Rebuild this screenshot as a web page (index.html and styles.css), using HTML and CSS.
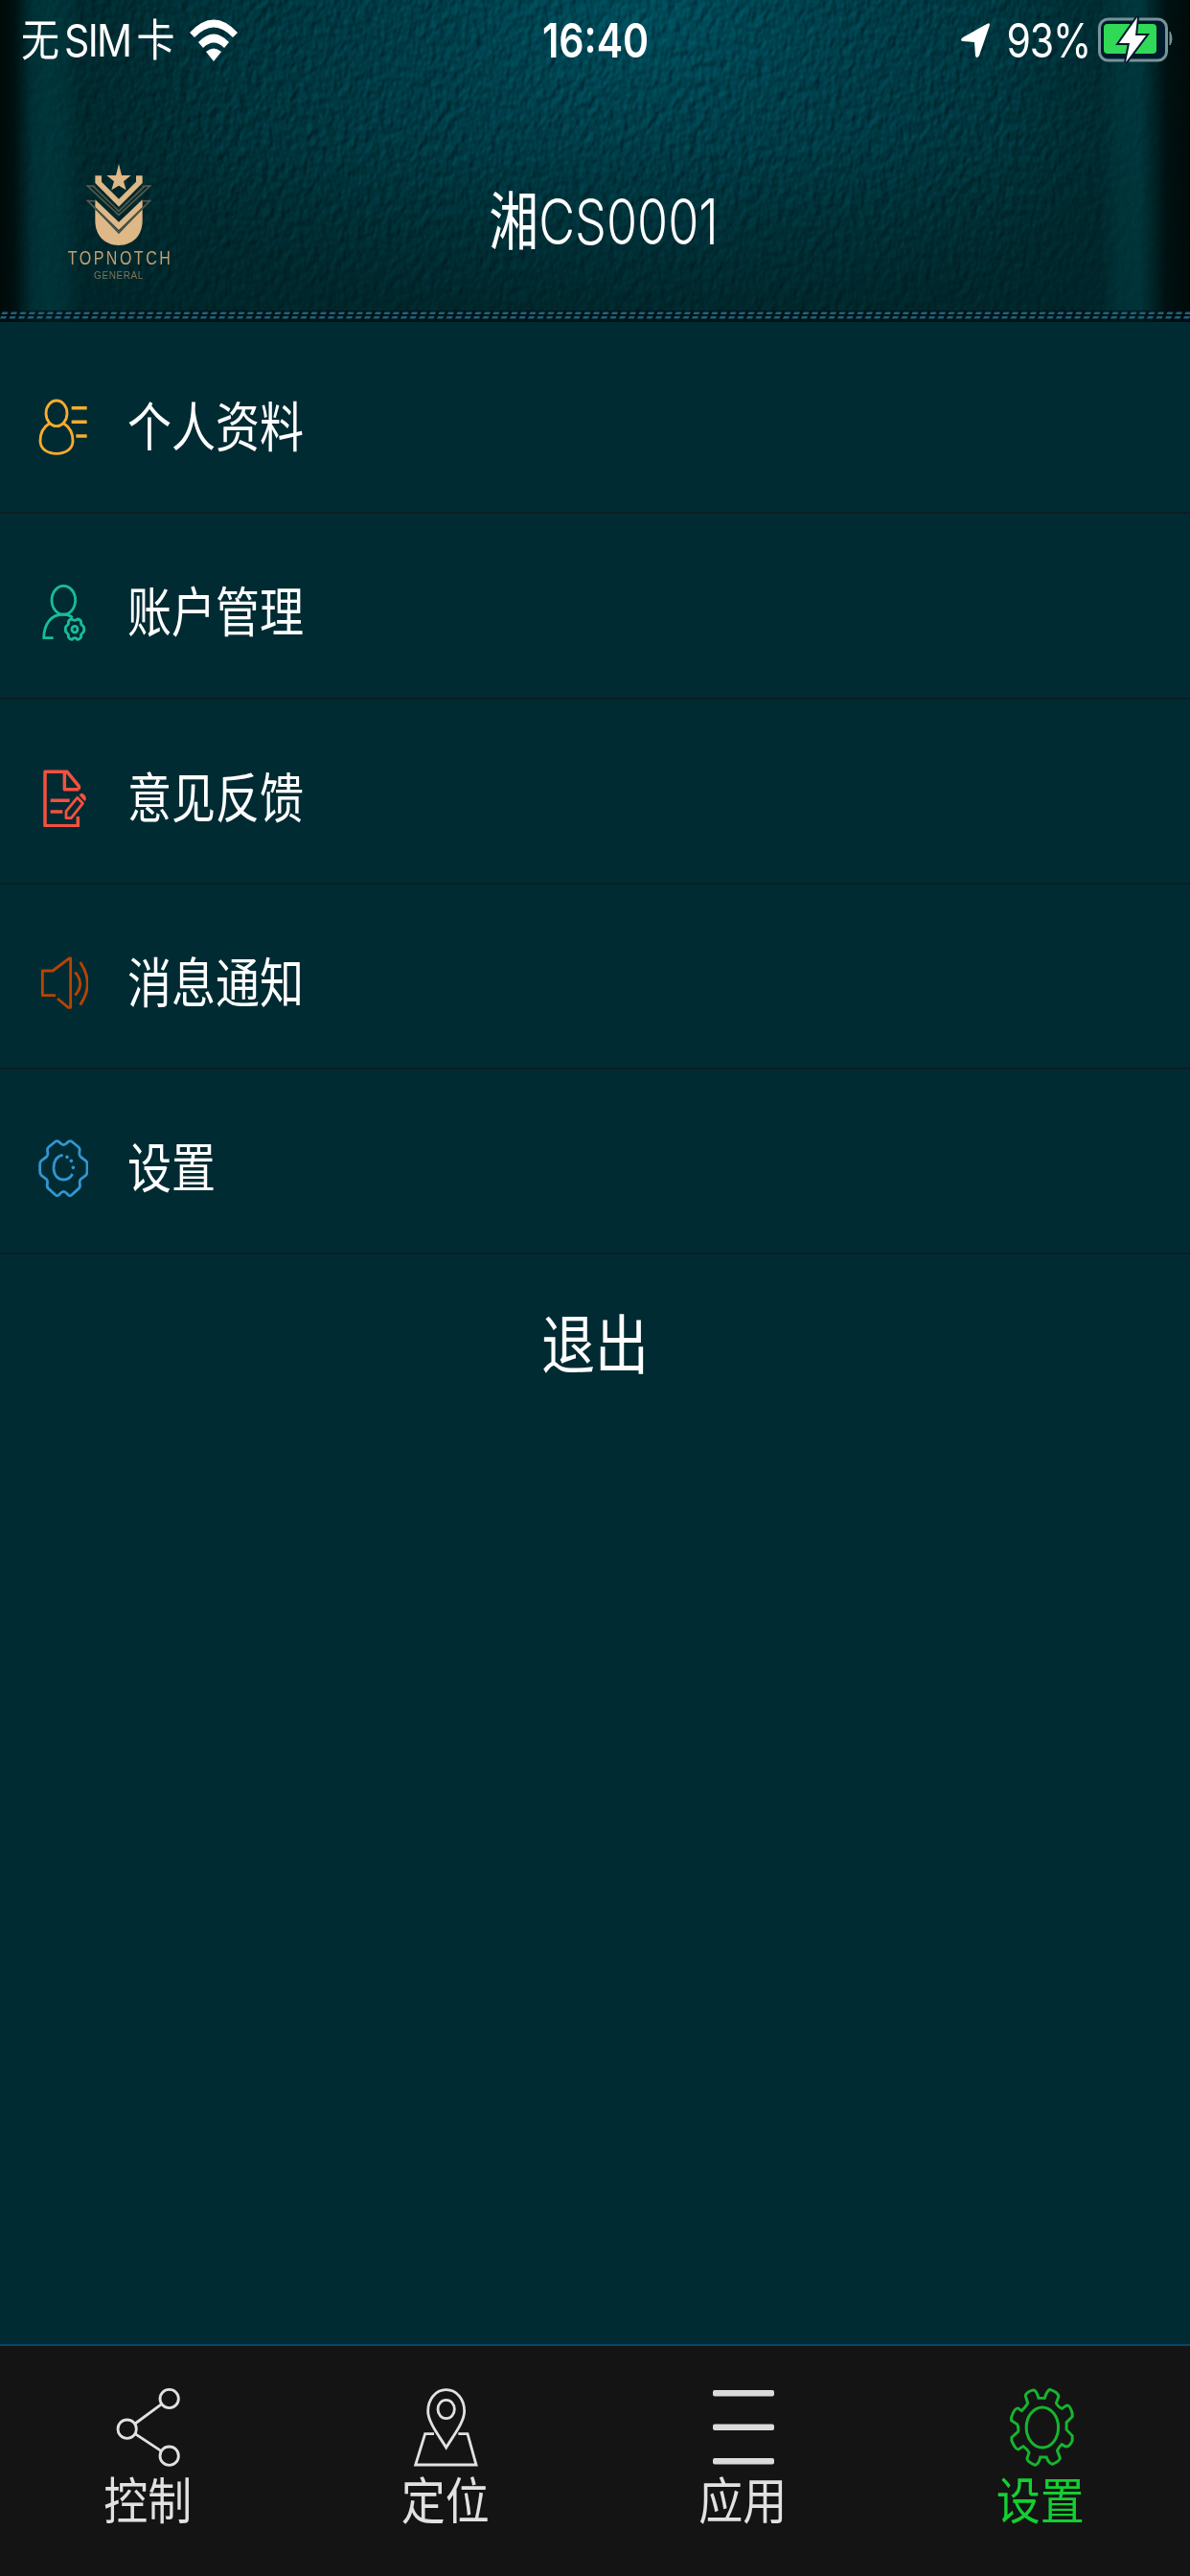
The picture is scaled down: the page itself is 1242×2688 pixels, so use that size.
FILE: index.html
```html
<!DOCTYPE html>
<html lang="zh-CN">
<head>
    <meta charset="UTF-8">
    <meta name="viewport" content="width=device-width, initial-scale=1.0">
    <title>设置</title>
    <link rel="stylesheet" href="styles.css">
</head>
<body>
    <div class="app">
        <header class="header">
            <svg class="leather" width="1242" height="336">
                <filter id="leather" x="0" y="0" width="100%" height="100%" color-interpolation-filters="sRGB">
                    <feTurbulence type="fractalNoise" baseFrequency="0.13 0.09" numOctaves="2" seed="8" result="noise"/>
                    <feDiffuseLighting in="noise" surfaceScale="1.9" diffuseConstant="0.64" lighting-color="#ffffff">
                        <feDistantLight azimuth="225" elevation="45"/>
                    </feDiffuseLighting>
                </filter>
                <rect width="1242" height="336" filter="url(#leather)"/>
            </svg>
            <div class="edges"></div>

            <!-- Status bar -->
            <div class="status-bar">
                <div class="status-left">
                    <span class="carrier">无<span class="sim">SIM</span>卡</span>
                    <svg class="wifi" width="50" height="45" viewBox="0 0 50 45">
                        <path d="M0 14Q25-13 50 14L45 19Q25-2 5 19Z"/>
                        <path d="M9 24Q25 7 41 24L36 30Q25 19 14 30Z"/>
                        <path d="M17 34Q25 27 33 34L25 44Z"/>
                    </svg>
                </div>
                <div class="clock">16:40</div>
                <div class="status-right">
                    <svg class="location" width="30" height="37" viewBox="0 0 30 37">
                        <path d="M30 2Q30-1 27 1L2 15Q-2 18 2 19L14 20L15 34Q16 38 19 34Z"/>
                    </svg>
                    <span class="percent">93%</span>
                    <svg class="battery" width="80" height="50" viewBox="0 0 80 50">
                        <rect x="1.5" y="3" width="70" height="43" rx="9" fill="#001b2c" stroke="#779499" stroke-width="3"/>
                        <rect x="6" y="8" width="55" height="31" rx="4" fill="#30d956"/>
                        <path d="M75 16Q79 24 75 30Z" fill="#779499" stroke="#779499"/>
                        <path d="M41 1L22 28H33L29 48L50 20H39Z" fill="#fff" stroke="#001b2c" stroke-width="4" paint-order="stroke"/>
                    </svg>
                </div>
            </div>

            <div class="title-bar">
                <div class="logo">
                    <svg width="68" height="86" viewBox="0 0 204 258">
                        <path d="M102 0L111 36H140L117 55L125 82L102 68L79 82L87 55L64 36H93Z"/>
                        <path d="M28 37H48V56L102 110L156 56V37H176V60L102 134L28 60Z"/>
                        <path d="M28 112L102 182L176 112V135L102 207L28 135Z"/>
                        <path d="M28 142L102 219L176 142V178C176 225 145 255 102 255S28 225 28 178Z"/>
                        <path class="logo-line" d="M28 70L4 69L102 160L200 69L176 70M28 117L4 115L102 213L200 115L176 117"/>
                        <path class="logo-line" d="M22 70L102 148L182 70"/>
                    </svg>
                    <div class="brand">TOPNOTCH</div>
                    <div class="brand-sub">GENERAL</div>
                </div>
                <h1 class="title">湘<span class="plate">CS0001</span></h1>
            </div>

            <svg class="stitch" width="1242" height="12">
                <defs>
                    <pattern id="stitch" width="9.5" height="12" patternUnits="userSpaceOnUse">
                        <path d="M1.5 4L2.5 1.5H8.5L7.5 4ZM0 8.5L1 6H7L6 8.5Z" fill="#22627a"/>
                    </pattern>
                </defs>
                <rect width="1242" height="12" fill="url(#stitch)"/>
            </svg>
        </header>

        <main class="content">
            <ul class="menu">
                <li class="menu-item">
                    <svg class="menu-icon orange" viewBox="0 0 156 180">
                        <ellipse cx="57" cy="46" rx="33" ry="40"/>
                        <path d="M35 77C17 88 6 109 6 132C6 158 29 172 57 172S108 158 108 132C108 109 97 88 79 77"/>
                        <path class="bold" d="M104 29H152M104 73H152M118 117H152"/>
                    </svg>
                    <span class="menu-text">个人资料</span>
                </li>
                <li class="menu-item">
                    <svg class="menu-icon green" viewBox="0 0 156 180">
                        <ellipse cx="79" cy="52" rx="37" ry="45"/>
                        <path d="M47 170H17C18 126 40 96 79 96Q94 96 107 106"/>
                        <path d="M114 115Q119 115 122 111Q130 111 134 119Q132 128 138 131Q144 135 143 143Q144 151 138 155Q132 158 134 167Q130 175 122 175Q119 170 114 170Q109 170 106 175Q98 175 94 167Q96 158 90 155Q84 151 85 143Q84 135 90 131Q96 128 94 119Q98 111 106 111Q109 115 114 115Z"/>
                        <ellipse cx="114" cy="143" rx="9" ry="10"/>
                    </svg>
                    <span class="menu-text">账户管理</span>
                </li>
                <li class="menu-item">
                    <svg class="menu-icon red" viewBox="0 0 156 180">
                        <path class="bold" d="M127 62H82V7M127 62V52L90 7H21V176H124V147M38 97H98M38 132H76"/>
                        <path d="M87 152L87 131L122 88L139 106L103 152Z"/>
                        <path class="fill" d="M129 79Q134 70 142 77Q151 84 149 95L145 99L129 81Z"/>
                    </svg>
                    <span class="menu-text">意见反馈</span>
                </li>
                <li class="menu-item">
                    <svg class="menu-icon rust" viewBox="0 0 156 180">
                        <path d="M54 128H13V51H45L97 12H101V166H94L60 138"/>
                        <path d="M115 55Q147 91 115 128M131 24Q177 91 131 158"/>
                    </svg>
                    <span class="menu-text">消息通知</span>
                </li>
                <li class="menu-item">
                    <svg class="menu-icon blue" viewBox="0 0 156 180">
                        <path d="M79 17Q84 17 94 7Q99 3 104 6L126 24Q131 28 129 37Q127 51 132 54L149 67Q153 70 153 78V98Q153 108 149 112L133 124Q128 128 130 140Q132 149 126 154L104 174Q99 178 94 174Q84 163 79 163Q74 163 64 174Q59 178 54 174L32 154Q26 149 28 140Q30 128 25 124L9 112Q5 108 5 98V78Q5 70 9 67L26 54Q31 51 29 37Q27 28 32 24L54 6Q59 3 64 7Q74 17 79 17Z"/>
                        <path d="M77 49C58 51 48 68 48 88C48 112 61 126 79 126Q97 126 107 108"/>
                        <path class="dots" d="M90 55H90.1M103 67H103.1M109 88H109.1"/>
                    </svg>
                    <span class="menu-text">设置</span>
                </li>
            </ul>
            <div class="logout"><span class="logout-text">退出</span></div>
        </main>

        <nav class="tabs">
            <div class="tab">
                <svg width="72" height="85" viewBox="0 0 216 255">
                    <circle cx="173" cy="39" r="29"/>
                    <circle cx="41" cy="134" r="29"/>
                    <circle cx="173" cy="218" r="29"/>
                    <path d="M149 56L66 117M66 149L148 203"/>
                </svg>
                <span class="tab-text">控制</span>
            </div>
            <div class="tab">
                <svg width="73" height="85" viewBox="0 0 219 255">
                    <path d="M110 11C76 11 53 42 53 78C53 111 85 151 110 192C135 151 167 111 167 78C167 42 144 11 110 11Z"/>
                    <ellipse cx="110" cy="72" rx="26" ry="29"/>
                    <path d="M72 149H44L14 246H204L177 149H148"/>
                </svg>
                <span class="tab-text">定位</span>
            </div>
            <div class="tab">
                <svg width="64" height="85" viewBox="0 0 64 85">
                    <g fill="#dcdada" stroke="none">
                        <rect y="4" width="64" height="6.5" rx="2"/>
                        <rect y="39.5" width="64" height="6.5" rx="2"/>
                        <rect y="75" width="64" height="6.5" rx="2"/>
                    </g>
                </svg>
                <span class="tab-text">应用</span>
            </div>
            <div class="tab active">
                <svg width="70" height="85" viewBox="0 0 197 255" preserveAspectRatio="none">
                    <path d="M90 37Q83 12 75 12L65 15Q50 23 52 32L58 52Q56 60 40 77L30 69Q20 67 10 97V107L27 119Q32 128 30 142L11 160V170Q20 195 30 198L45 188Q57 197 62 208L56 226Q57 237 80 247Q90 244 95 222H113Q119 240 130 244Q151 236 153 225L145 202Q146 196 158 182L170 189Q181 190 189 170V155L172 136V113L189 95V85Q182 58 172 60L158 70Q143 60 142 52L149 32Q147 18 123 10Q114 14 108 37Z"/>
                    <ellipse cx="101" cy="129" rx="47" ry="63"/>
                </svg>
                <span class="tab-text">设置</span>
            </div>
        </nav>
    </div>
</body>
</html>
```

FILE: styles.css
```css
* {
    box-sizing: border-box;
}
body {
    margin: 0;
    background-color: #002b33;
    color: #fff;
    font-family: Inter, "Noto Sans CJK SC", sans-serif;
}
.app {
    display: flex;
    flex-direction: column;
    width: 1242px;
    height: 2688px;
    overflow: hidden;
}

/* Header */
.header {
    position: relative;
    display: flex;
    flex-direction: column;
    height: 336px;
    background: radial-gradient(ellipse 600px 330px at 670px 20px, #00505f 0%, #00414d 40%, #003137 100%);
}
.leather {
    position: absolute;
    top: 0;
    left: 0;
    mix-blend-mode: soft-light;
}
.edges {
    position: absolute;
    inset: 0;
    background:
        linear-gradient(to right, #000b09 0, rgba(0,12,12,0.9) 14px, rgba(0,50,55,0.7) 34px, rgba(0,58,63,0.65) 50px, rgba(0,54,59,0.6) 68px, rgba(0,36,40,0.4) 84px, transparent 240px, transparent 1040px, rgba(0,36,40,0.4) 1148px, rgba(0,56,61,0.6) 1168px, rgba(0,58,64,0.65) 1190px, rgba(0,14,14,0.9) 1218px, #000b09 1242px),
        linear-gradient(to bottom, transparent 150px, rgba(0,32,36,0.5) 320px);
}
.status-bar {
    position: relative;
    display: flex;
    align-items: center;
    justify-content: space-between;
    height: 84px;
    padding: 0 16px 0 22px;
}
.status-left,
.status-right {
    display: flex;
    align-items: center;
    width: 240px;
}
.status-right {
    justify-content: flex-end;
}
.carrier {
    display: flex;
    align-items: center;
    font-size: 40px;
    line-height: 50px;
    transform: scaleY(1.15);
}
.sim {
    margin: 0 6px 0 5px;
    font-size: 41px;
    letter-spacing: -1.6px;
}
.wifi {
    margin-left: 15px;
    fill: #fff;
}
.clock {
    margin-right: 5px;
    font-size: 41px;
    font-weight: 600;
    line-height: 50px;
    transform: scaleY(1.2);
}
.location {
    flex: none;
    margin-right: 18px;
    fill: #fff;
}
.percent {
    margin-right: 8px;
    font-size: 41px;
    line-height: 50px;
    letter-spacing: -1.2px;
    transform: scaleY(1.2);
}
.battery {
    flex: none;
}
.title-bar {
    position: relative;
    display: grid;
    grid-template-columns: 248px 1fr 230px;
    height: 240px;
}
.logo {
    display: flex;
    flex-direction: column;
    align-items: center;
    padding-top: 87px;
    fill: #deb887;
    color: #c0a074;
}
.logo-line {
    fill: none;
    stroke: #55594a;
    stroke-width: 5;
}
.brand {
    margin: 4px 0 0 3px;
    font-family: "Liberation Sans", sans-serif;
    font-size: 16px;
    line-height: 18px;
    letter-spacing: 2.5px;
    transform: scaleY(1.25);
}
.brand-sub {
    margin-top: 3px;
    color: #7d7558;
    font-family: "Liberation Sans", sans-serif;
    font-size: 10px;
    line-height: 12px;
    letter-spacing: 0.6px;
    transform: scaleY(1.15);
}
.title {
    margin: 117px 0 0;
    font-size: 52px;
    font-weight: 400;
    line-height: 60px;
    text-align: center;
    transform: translateY(10px) scaleY(1.26);
}
.plate {
    font-weight: 300;
}
.stitch {
    position: relative;
    background-color: rgba(0, 14, 18, 0.7);
}

/* Menu */
.content {
    flex: 1;
    padding-top: 7px;
}
.menu {
    margin: 0;
    padding: 0;
    list-style: none;
}
.menu-item {
    display: flex;
    align-items: center;
    gap: 41px;
    height: 193.3px;
    padding: 15px 0 0 40px;
    border-bottom: 2px solid #0c1d23;
}
.menu-icon {
    width: 52px;
    height: 60px;
    fill: none;
    stroke: currentColor;
    stroke-width: 8.5;
    stroke-linejoin: round;
}
.menu-icon .bold {
    stroke-width: 10.5;
}
.menu-icon .fill {
    fill: currentColor;
    stroke: none;
}
.menu-icon .dots {
    stroke-width: 11;
    stroke-linecap: round;
}
.orange { color: #fbac2c; }
.green { color: #19bc9b; }
.red { color: #f4513f; }
.rust { color: #b94300; }
.blue { color: #3296d0; }
.menu-text {
    font-size: 46px;
    line-height: 60px;
    transform: scaleY(1.2);
}
.logout {
    display: flex;
    justify-content: center;
    padding-top: 60px;
}
.logout-text {
    font-size: 56px;
    line-height: 70px;
    transform: scaleY(1.2);
}

/* Bottom tabs */
.tabs {
    display: grid;
    grid-template-columns: repeat(4, 1fr);
    height: 242px;
    border-top: 2px solid #09476b;
    background-color: #141414;
}
.tab {
    display: flex;
    flex-direction: column;
    align-items: center;
    padding-top: 42px;
    color: #e2e1e1;
}
.tab svg {
    fill: none;
    stroke: currentColor;
    stroke-width: 8.5;
}
.tab-text {
    margin-right: 2px;
    padding-top: 4px;
    font-size: 46px;
    line-height: 60px;
    transform: scaleY(1.14);
}
.tab.active {
    color: #14cf32;
}
.tab.active svg {
    color: #16b52e;
}
```
